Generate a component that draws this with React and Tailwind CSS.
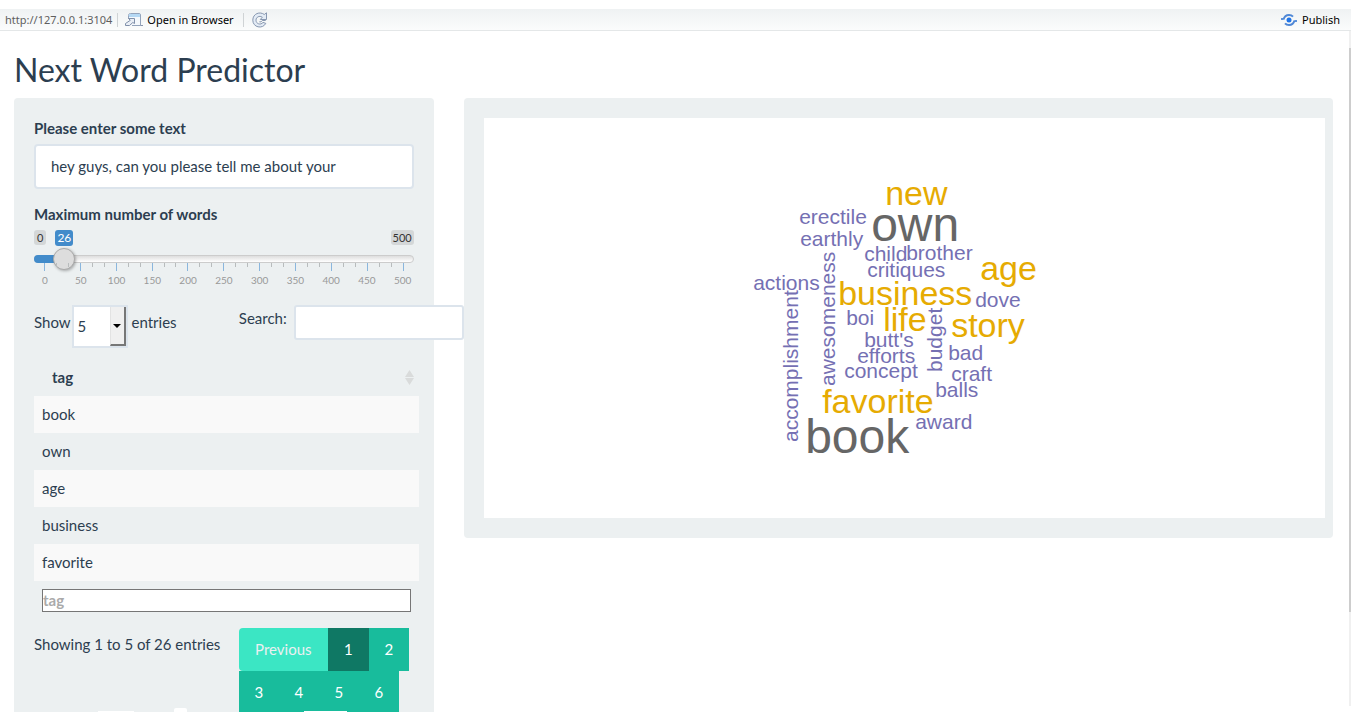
import React, { useState } from "react";

const PURPLE = "#7570b3";
const GOLD = "#e6ab02";
const GRAY = "#666666";

const words = [
  { t: "new", x: 401, y: 87, s: 34, c: GOLD },
  { t: "own", x: 387, y: 123, s: 48, c: GRAY },
  { t: "erectile", x: 315, y: 106, s: 21, c: PURPLE },
  { t: "earthly", x: 316, y: 128, s: 21, c: PURPLE },
  { t: "child", x: 380, y: 143, s: 21, c: PURPLE },
  { t: "brother", x: 422, y: 142, s: 21, c: PURPLE },
  { t: "critiques", x: 383, y: 159, s: 21, c: PURPLE },
  { t: "age", x: 496, y: 162, s: 34, c: GOLD },
  { t: "actions", x: 269, y: 172, s: 21, c: PURPLE },
  { t: "business", x: 354, y: 187, s: 34, c: GOLD },
  { t: "dove", x: 491, y: 189, s: 21, c: PURPLE },
  { t: "boi", x: 362, y: 207, s: 21, c: PURPLE },
  { t: "life", x: 399, y: 213, s: 34, c: GOLD },
  { t: "story", x: 467, y: 219, s: 34, c: GOLD },
  { t: "butt's", x: 380, y: 229, s: 21, c: PURPLE },
  { t: "efforts", x: 373, y: 245, s: 21, c: PURPLE },
  { t: "bad", x: 464, y: 242, s: 21, c: PURPLE },
  { t: "concept", x: 360, y: 260, s: 21, c: PURPLE },
  { t: "craft", x: 467, y: 263, s: 21, c: PURPLE },
  { t: "balls", x: 451, y: 279, s: 21, c: PURPLE },
  { t: "favorite", x: 338, y: 295, s: 34, c: GOLD },
  { t: "book", x: 321, y: 335, s: 48, c: GRAY },
  { t: "award", x: 431, y: 311, s: 21, c: PURPLE },
  { t: "accomplishment", x: 314, y: 324, s: 21, c: PURPLE, up: true },
  { t: "awesomeness", x: 351, y: 268, s: 21, c: PURPLE, up: true },
  { t: "budget", x: 458, y: 254, s: 21, c: PURPLE, up: true },
];

function WordCloud() {
  return (
    <svg
      viewBox="0 0 841 400"
      className="block h-[400px] w-full bg-white"
      role="img"
      aria-label="Word cloud"
      fontFamily="'Liberation Sans', Arial, sans-serif"
    >
      {words.map((w) => (
        <text
          key={w.t}
          x={w.x}
          y={w.y}
          fontSize={w.s}
          fill={w.c}
          transform={w.up ? `rotate(-90 ${w.x} ${w.y})` : undefined}
        >
          {w.t}
        </text>
      ))}
    </svg>
  );
}

function OpenIcon() {
  return (
    <svg width="18" height="14" viewBox="0 0 18 14" fill="none">
      <path d="M3.500 6V2.500q0-2 2-2h8.500q1.500 0 1.500 1.500V12.500H7" fill="#f4f8fc" stroke="#93a3bb" />
      <path d="M4 1h11v3H4z" fill="#b4d8f4" />
      <path d="M15.500 12.500h2.500" stroke="#8795ac" />
      <path
        d="M3.500 5.500h6v5l-1.700-1-3.300 3h-4v-2L5.300 7.300z"
        fill="#e9eef5"
        stroke="#7f8fa9"
        strokeLinejoin="round"
      />
    </svg>
  );
}

function RefreshIcon() {
  return (
    <svg width="16" height="16" viewBox="0 0 16 16" fill="none">
      <path
        d="M12.300 2.500 14.500.8v6.700H8.300l2-2.300C7.500 3.300 4 5 4 8.200c0 3.800 4.800 5.200 7 2.200l2.800 1C10.500 17.500.8 15.500.8 8.200.8 1.500 8-.8 12.300 2.500z"
        fill="#e3ebf5"
        stroke="#8797b0"
        strokeLinejoin="round"
      />
      <path d="M7.300 9.800q2 .8 3-1.300h3.400" stroke="#8797b0" />
    </svg>
  );
}

function PublishIcon() {
  return (
    <svg width="16" height="12" viewBox="0 0 16 12" fill="none">
      <path d="M0 5h2.500M13.500 7H16" stroke="#5c92dc" strokeWidth="2" />
      <path
        d="M2.500 5.500C3.500 2 6 1 8 1c1.800 0 3 .6 4 1.700M13.500 6.500C12.500 10 10 11 8 11c-1.800 0-3-.6-4-1.700"
        stroke="#4f87d6"
        strokeWidth="2"
      />
      <circle cx="8" cy="6" r="2.500" fill="#1f74e8" />
    </svg>
  );
}

function Toolbar() {
  return (
    <header className="flex h-[22px] shrink-0 items-center border-b border-[#e4e7e8] bg-linear-to-b from-[#eff2f3] to-[#fbfcfc] pr-[11px] pl-[5px] font-['Noto_Sans','Open_Sans',sans-serif] text-[11px] leading-[16px] text-black">
      <span className="text-[#5f5f5f]">http://127.0.0.1:3104</span>
      <span className="mr-[7px] ml-[5px] h-[14px] w-px bg-[#cfd3d5]" />
      <button type="button" className="flex items-center gap-1">
        <OpenIcon />
        Open in Browser
      </button>
      <span className="mr-2 ml-[9px] h-[14px] w-px bg-[#cfd3d5]" />
      <button type="button" aria-label="Refresh">
        <RefreshIcon />
      </button>
      <button type="button" className="ml-auto flex items-center gap-[5px]">
        <PublishIcon />
        Publish
      </button>
    </header>
  );
}

const ticks = Array.from({ length: 31 }, (_, i) => i);
const marks = [0, 50, 100, 150, 200, 250, 300, 350, 400, 450, 500];

function WordSlider() {
  const [value, setValue] = useState(26);
  return (
    <div>
      <div className="flex h-[18px] items-start text-[11px] leading-[15px] text-[#333]">
        <span className="rounded-[3px] bg-black/10 px-[3px]">0</span>
        <span className="ml-[9px] rounded-[3px] bg-[#428bca] px-[2px] text-[12px] leading-[16px] text-white">
          {value}
        </span>
        <span className="ml-auto rounded-[3px] bg-black/10 px-[2px]">500</span>
      </div>
      <div className="grid items-center">
        <div className="col-start-1 row-start-1 h-2 overflow-hidden rounded-full border border-[#ccc] bg-linear-to-b from-[#dedede] to-white" />
        <div
          className="col-start-1 row-start-1 h-2 rounded-l-full bg-[#428bca]"
          style={{ width: `${3 + (value / 500) * 94}%` }}
        />
        <input
          id="max-words"
          type="range"
          min="0"
          max="500"
          value={value}
          onChange={(e) => setValue(Number(e.target.value))}
          className="col-start-1 row-start-1 m-0 h-[22px] w-full cursor-pointer appearance-none bg-transparent [&::-webkit-slider-thumb]:h-[22px] [&::-webkit-slider-thumb]:w-[22px] [&::-webkit-slider-thumb]:appearance-none [&::-webkit-slider-thumb]:rounded-full [&::-webkit-slider-thumb]:border [&::-webkit-slider-thumb]:border-[#aaa] [&::-webkit-slider-thumb]:bg-[#ddd] [&::-webkit-slider-thumb]:shadow-[1px_1px_3px_rgba(0,0,0,0.3)]"
        />
      </div>
      <div className="-mt-[7px] flex justify-between px-[10px]">
        {ticks.map((i) => (
          <span key={i} className={i % 3 === 0 ? "h-2 w-px bg-[#8ab6dd]" : "h-1 w-px bg-[#b8bcbd]"} />
        ))}
      </div>
      <div className="mt-[3px] flex justify-between px-[11px] text-[10px] leading-[12px] text-[#999]">
        {marks.map((m) => (
          <span key={m} className="flex w-0 justify-center">
            {m}
          </span>
        ))}
      </div>
    </div>
  );
}

function ResultsTable() {
  return (
    <table className="w-[385px] border-collapse text-left">
      <thead>
        <tr className="h-[37px]">
          <th className="pr-[5px] pl-[18px] font-bold">
            <button type="button" className="flex w-full items-center justify-between font-bold">
              tag
              <svg width="9" height="15" viewBox="0 0 9 15" fill="#d9dbdb">
                <path d="M4.500 0 9 7H0zM0 8h9l-4.500 7z" />
              </svg>
            </button>
          </th>
        </tr>
      </thead>
      <tbody>
        {["book", "own", "age", "business", "favorite"].map((w) => (
          <tr key={w} className="h-[37px] odd:bg-[#f9f9f9]">
            <td className="px-2">{w}</td>
          </tr>
        ))}
      </tbody>
      <tfoot>
        <tr>
          <td className="px-2 pt-2">
            <input
              aria-label="Filter tag"
              placeholder="tag"
              className="block h-[23px] w-full border border-[#767676] bg-white pb-[2px] font-bold placeholder:text-[#aaa]"
            />
          </td>
        </tr>
      </tfoot>
    </table>
  );
}

function Sidebar() {
  return (
    <form className="col-span-4 rounded bg-[#ecf0f1] px-5 pt-5 pb-10">
      <label htmlFor="phrase" className="block font-bold">
        Please enter some text
      </label>
      <input
        id="phrase"
        defaultValue="hey guys, can you please tell me about your"
        className="mt-[5px] block h-[45px] w-full rounded border-2 border-[#dce4ec] bg-white px-[15px] pb-[2px]"
      />
      <label htmlFor="max-words" className="mt-[15px] mb-[5px] block font-bold">
        Maximum number of words
      </label>
      <WordSlider />

      <div className="mt-[19px] grid grid-cols-2 gap-[30px]">
        <div className="flex h-[43px] items-start">
          <label htmlFor="length" className="mt-[7px]">
            Show
          </label>
          <span className="relative mr-1 ml-px">
            <select
              id="length"
              defaultValue="5"
              className="block h-[43px] w-[56px] appearance-none border-2 border-[#dce4ec] bg-white pl-1"
            >
              <option value="5">5</option>
            </select>
            <span className="pointer-events-none absolute inset-y-[2px] right-[2px] flex w-4 items-center justify-center border-r-2 border-b-2 border-l border-r-[#777] border-b-[#777] border-l-[#e3e3e3] bg-[#f0f0f0]">
              <svg width="8" height="4" viewBox="0 0 8 4">
                <path d="M0 0h8L4 4z" />
              </svg>
            </span>
          </span>
          <span className="mt-[7px]">entries</span>
        </div>
        <div className="flex items-start gap-[7px]">
          <label htmlFor="search" className="mt-[3px]">
            Search:
          </label>
          <input
            id="search"
            type="text"
            className="h-[35px] w-[170px] shrink-0 rounded-[3px] border-2 border-[#dce4ec] bg-white px-2"
          />
        </div>
      </div>

      <div className="mt-[11px]">
        <ResultsTable />
      </div>

      <div className="mt-4 grid grid-cols-2 gap-[30px]">
        <p className="mt-[6px] whitespace-nowrap">Showing 1 to 5 of 26 entries</p>
        <nav className="flex flex-wrap text-white">
          <button type="button" className="h-[43px] w-[89px] rounded-l bg-[#3be6c4] text-[#ecf0f1]">
            Previous
          </button>
          <button type="button" className="h-[43px] w-[41px] bg-[#0f7864]">
            1
          </button>
          {[2, 3, 4, 5, 6].map((n) => (
            <button key={n} type="button" className="h-[43px] w-10 bg-[#18bc9c]">
              {n}
            </button>
          ))}
        </nav>
      </div>
    </form>
  );
}

export default function App() {
  return (
    <div className="flex h-screen flex-col bg-white pt-[9px] pb-[5px]">
      <Toolbar />
      <div className="relative flex min-h-0 flex-1 overflow-hidden">
        <div className="min-w-0 flex-1 pr-4 pl-[14px] font-['Lato',sans-serif] text-[15px] leading-[21px] text-[#2c3e50]">
          <h1 className="mt-[20px] mb-[10px] text-[32px] leading-[37px]">Next Word Predictor</h1>
          <div className="grid grid-cols-12 items-start gap-x-[30px]">
            <Sidebar />
            <main className="relative col-span-8 rounded bg-[#ecf0f1] px-5 py-5 pr-2">
              <WordCloud />
            </main>
          </div>
        </div>
        <div className="mb-[6px] w-[2px] shrink-0 bg-[#f0f0f0] pt-[17px]">
          <div className="h-6/7 bg-[#cdcdcd]" />
        </div>
        <div className="absolute bottom-0 left-[98px] h-px w-9 bg-white" />
        <div className="absolute bottom-0 left-[174px] h-1 w-[13px] rounded-t-xs bg-white" />
        <div className="absolute bottom-0 left-[304px] h-px w-[43px] bg-white" />
      </div>
    </div>
  );
}
